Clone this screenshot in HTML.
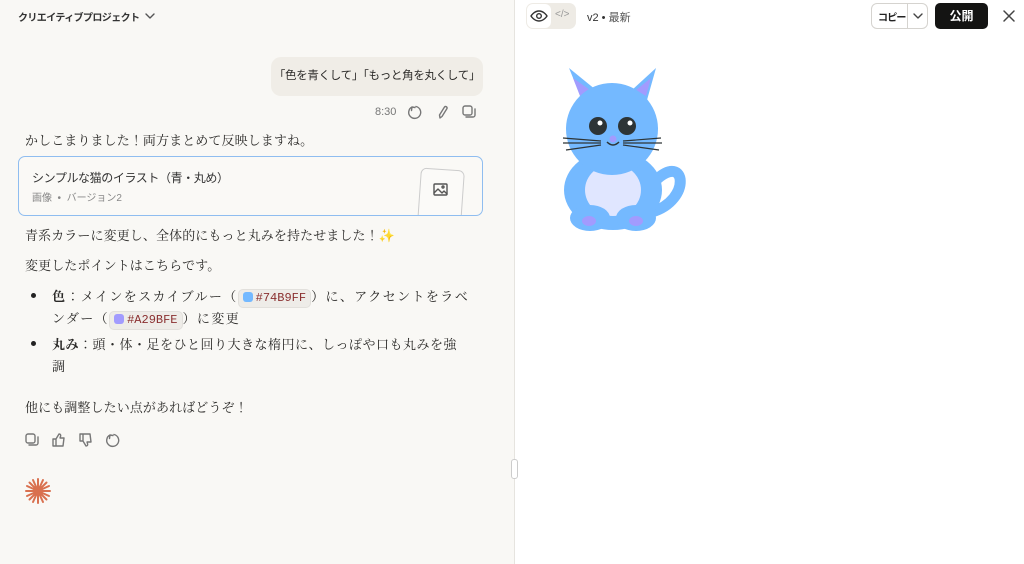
<!DOCTYPE html>
<html><head><meta charset="utf-8"><style>
*{margin:0;padding:0;box-sizing:border-box}
body{width:1024px;height:564px;overflow:hidden;position:relative;background:#fff;font-family:"Liberation Sans","Noto Sans CJK JP",sans-serif;color:#222}
#left{position:absolute;left:0;top:0;width:515px;height:564px;background:#f9f8f5;border-right:1px solid #e6e4df}
.a{position:absolute;white-space:nowrap}
.ser{font-family:"Liberation Serif","Noto Serif CJK JP",serif;font-size:13px;letter-spacing:0.1px;color:#2b2a28}
.chip{display:inline-block;background:#eeece8;border:1px solid #e2e0dc;border-radius:5px;padding:0 4px;font-family:"Liberation Mono",monospace;font-size:12px;color:#8a2f2f;line-height:17px;letter-spacing:0}
.sw{display:inline-block;width:10px;height:10px;border-radius:3px;vertical-align:-1px;margin-right:3px}
svg.i{position:absolute;fill:none;stroke:#777;stroke-width:1.4;stroke-linecap:round;stroke-linejoin:round}
</style></head><body>
<div id="left">
<div class="a" style="left:18px;top:9px;font-size:10px;font-weight:bold;color:#333;letter-spacing:-0.6px">クリエイティブプロジェクト</div>
<svg class="i" style="left:144px;top:11px;z-index:2" width="12" height="10"><path d="M2 3l4 4 4-4" stroke="#555"/></svg>
<div class="a" style="left:271px;top:57px;width:212px;height:39px;background:#f0ede7;border-radius:10px;font-size:11.5px;letter-spacing:-0.3px;line-height:39px;text-align:center;color:#2b2a28">「色を青くして」「もっと角を丸くして」</div>
<div class="a" style="left:375px;top:106px;font-size:11px;color:#777">8:30</div>
<svg class="i" style="left:407px;top:104px" width="16" height="16"><path d="M5 3A6 6 0 1 0 9 2.5M5 3l-0.5 3.5M5 3l3 0.5"/></svg>
<svg class="i" style="left:435px;top:104px" width="16" height="16"><path d="M5 14l-0.5-3 5-8a1.5 1.5 0 0 1 2.5 1.5l-5 8z"/></svg>
<svg class="i" style="left:461px;top:104px" width="16" height="16"><rect x="2" y="2" width="9" height="9" rx="2"/><path d="M5 13h7a2 2 0 0 0 2-2V5"/></svg>
<div class="a ser" style="left:25px;top:130px">かしこまりました！両方まとめて反映しますね。</div>
<div class="a" style="left:18px;top:156px;width:465px;height:60px;border:1.5px solid #8fbdf0;border-radius:7px;background:#faf9f6;overflow:hidden">
 <div class="a" style="left:13px;top:12px;font-size:12px;letter-spacing:-0.4px;color:#333">シンプルな猫のイラスト（青・丸め）</div>
 <div class="a" style="left:13px;top:32px;font-size:10px;color:#888">画像 &nbsp;•&nbsp; バージョン2</div>
 <div class="a" style="left:400px;top:12px;width:44px;height:56px;border:1px solid #ccc;border-radius:6px;background:#fbfaf8;transform:rotate(4deg)"></div>
 <svg class="i" style="left:414px;top:26px;stroke:#555" width="16" height="14"><rect x="1" y="1" width="13" height="11" rx="1"/><path d="M1 10l4-4 4 4 2-2 3 3"/><circle cx="10" cy="4" r="1"/></svg>
</div>
<div class="a ser" style="left:25px;top:225px">青系カラーに変更し、全体的にもっと丸みを持たせました！<span style="color:#f2b42c">✨</span></div>
<div class="a ser" style="left:25px;top:255px">変更したポイントはこちらです。</div>
<div class="a" style="left:31px;top:293px;width:5px;height:5px;border-radius:50%;background:#222"></div>
<div class="a ser" style="left:52px;top:286px;letter-spacing:1.4px"><b>色</b>：メインをスカイブルー（<span class="chip"><span class="sw" style="background:#74b9ff"></span>#74B9FF</span>）に、アクセントをラベ</div>
<div class="a ser" style="left:52px;top:308px;letter-spacing:1.4px">ンダー（<span class="chip"><span class="sw" style="background:#a29bfe"></span>#A29BFE</span>）に変更</div>
<div class="a" style="left:31px;top:341px;width:5px;height:5px;border-radius:50%;background:#222"></div>
<div class="a ser" style="left:52px;top:334px;letter-spacing:0.5px"><b>丸み</b>：頭・体・足をひと回り大きな楕円に、しっぽや口も丸みを強</div>
<div class="a ser" style="left:52px;top:356px">調</div>
<div class="a ser" style="left:25px;top:397px">他にも調整したい点があればどうぞ！</div>
<svg class="i" style="left:24px;top:432px" width="16" height="16"><rect x="2" y="2" width="9" height="9" rx="2"/><path d="M5 13h7a2 2 0 0 0 2-2V5"/></svg>
<svg class="i" style="left:51px;top:432px" width="16" height="16"><path d="M2 7h3v7H2zM5 7l3-5c1.5 0 2 1 1.5 2.5L9 6h4l-1 8H5"/></svg>
<svg class="i" style="left:78px;top:432px" width="16" height="16"><path d="M2 2h3v7H2zM5 9l3 5c1.5 0 2-1 1.5-2.5L9 10h4l-1-8H5"/></svg>
<svg class="i" style="left:105px;top:432px" width="16" height="16"><path d="M5 3A6 6 0 1 0 9 2.5M5 3l-0.5 3.5M5 3l3 0.5"/></svg>
<svg class="i" style="left:24px;top:477px;stroke:#d9704f;stroke-width:2" width="28" height="28"><path d="M14 2v24M2 14h24M5.5 5.5l17 17M22.5 5.5l-17 17M9 3l10 22M19 3L9 25M3 9l22 10M3 19l22-10"/></svg>
</div>
<div class="a" style="left:511px;top:459px;width:7px;height:20px;border:1px solid #ccc;border-radius:3px;background:#fff"></div>
<div class="a" style="left:526px;top:3px;width:50px;height:26px;background:#eeebe5;border-radius:7px"></div>
<div class="a" style="left:527px;top:4px;width:24px;height:24px;background:#fff;border-radius:6px"></div>
<svg class="i" style="left:530px;top:9px;stroke:#333" width="18" height="14"><path d="M1 7s3-5 8-5 8 5 8 5-3 5-8 5-8-5-8-5z"/><circle cx="9" cy="7" r="2.3"/></svg>
<div class="a" style="left:555px;top:9px;font-size:10px;color:#999">&lt;/&gt;</div>
<div class="a" style="left:587px;top:9px;font-size:11px;color:#333">v2 • <span style="color:#555">最新</span></div>
<div class="a" style="left:871px;top:3px;width:57px;height:26px;border:1px solid #d5d3cf;border-radius:6px;background:#fff"></div>
<div class="a" style="left:907px;top:4px;width:1px;height:24px;background:#d5d3cf"></div>
<div class="a" style="left:878px;top:9px;font-size:10px;letter-spacing:-0.8px;color:#222;font-weight:bold">コピー</div>
<svg class="i" style="left:912px;top:12px;stroke:#444" width="12" height="8"><path d="M2 2l4 4 4-4"/></svg>
<div class="a" style="left:935px;top:3px;width:53px;height:26px;background:#141413;border-radius:5px;color:#fff;font-size:12px;font-weight:bold;text-align:center;line-height:26px">公開</div>
<svg class="i" style="left:1002px;top:9px;stroke:#444;stroke-width:1.5" width="14" height="14"><path d="M2 2l10 10M12 2L2 12"/></svg>
<svg class="a" style="left:0;top:0" width="1024" height="564">
<path d="M656 180C686 152 692 200 652 212" stroke="#74b9ff" stroke-width="11" fill="none" stroke-linecap="round"/>
<polygon points="569,68 582,100 596,90" fill="#74b9ff"/><polygon points="656,68 647,100 632,90" fill="#74b9ff"/>
<polygon points="573,78 580,96 590,90" fill="#a29bfe"/><polygon points="651,78 646,96 636,90" fill="#a29bfe"/>
<ellipse cx="613" cy="190" rx="49" ry="40" fill="#74b9ff"/>
<ellipse cx="613" cy="190" rx="28" ry="26" fill="#e0e6ff"/>
<circle cx="612" cy="129" r="46" fill="#74b9ff"/>
<ellipse cx="590" cy="218" rx="20" ry="13" fill="#74b9ff"/><ellipse cx="636" cy="218" rx="20" ry="13" fill="#74b9ff"/>
<ellipse cx="589" cy="221" rx="7" ry="5" fill="#a29bfe"/><ellipse cx="636" cy="221" rx="7" ry="5" fill="#a29bfe"/>
<circle cx="598" cy="126" r="9" fill="#2d3436"/><circle cx="627" cy="126" r="9" fill="#2d3436"/>
<circle cx="600" cy="123" r="2.5" fill="#fff"/><circle cx="630" cy="123" r="2.5" fill="#fff"/>
<circle cx="613" cy="139" r="3.5" fill="#a29bfe"/>
<path d="M607 142q6 6 12 0" stroke="#2d3436" stroke-width="1.5" fill="none"/>
<g stroke="#2d3436" stroke-width="1.2"><path d="M563 138l38 3M563 143l38 0M566 150l35-5M661 138l-38 3M662 143l-39 0M659 150l-36-5"/></g>
</svg>
</body></html>
